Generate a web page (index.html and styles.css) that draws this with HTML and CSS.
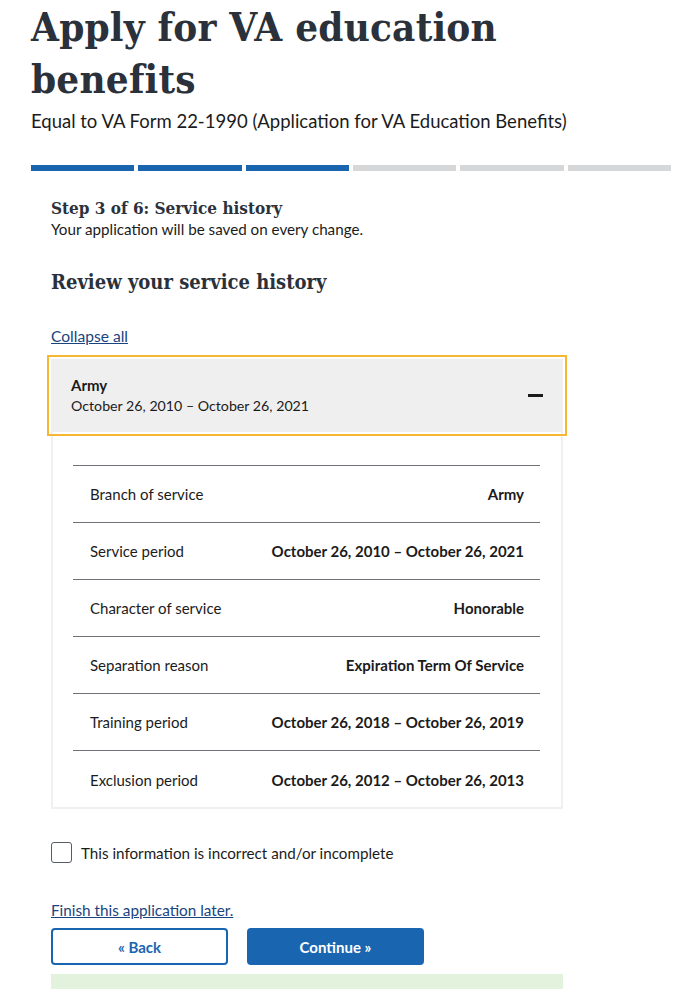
FILE: index.html
```html
<!DOCTYPE html>
<html lang="en">
<head>
<meta charset="utf-8">
<title>Apply for VA education benefits</title>
<link rel="stylesheet" href="styles.css">
</head>
<body>
<div class="page">
  <header class="intro">
    <h1 class="title">Apply for VA education benefits</h1>
    <p class="subtitle">Equal to VA Form 22-1990 (Application for VA Education Benefits)</p>
  </header>
  <div class="progress">
    <span class="seg done"></span><span class="seg done"></span><span class="seg done"></span><span class="seg"></span><span class="seg"></span><span class="seg"></span>
  </div>
  <main class="form">
    <h2 class="step">Step 3 of 6: Service history</h2>
    <p class="saved">Your application will be saved on every change.</p>
    <h3 class="section-title">Review your service history</h3>
    <a class="link collapse" href="#">Collapse all</a>
    <div class="accordion">
      <button class="acc-head" type="button">
        <span class="acc-text">
          <span class="acc-title">Army</span>
          <span class="acc-sub">October 26, 2010 – October 26, 2021</span>
        </span>
        <span class="minus"></span>
      </button>
      <div class="acc-body">
        <dl class="rows">
          <div class="row"><dt>Branch of service</dt><dd>Army</dd></div>
          <div class="row"><dt>Service period</dt><dd>October 26, 2010 – October 26, 2021</dd></div>
          <div class="row"><dt>Character of service</dt><dd>Honorable</dd></div>
          <div class="row"><dt>Separation reason</dt><dd>Expiration Term Of Service</dd></div>
          <div class="row"><dt>Training period</dt><dd>October 26, 2018 – October 26, 2019</dd></div>
          <div class="row"><dt>Exclusion period</dt><dd>October 26, 2012 – October 26, 2013</dd></div>
        </dl>
      </div>
    </div>
    <label class="check">
      <span class="box"></span>
      <span>This information is incorrect and/or incomplete</span>
    </label>
    <a class="link finish" href="#">Finish this application later.</a>
    <div class="actions">
      <button class="btn btn-outline" type="button">« Back</button>
      <button class="btn btn-primary" type="button">Continue »</button>
    </div>
    <div class="notice"></div>
  </main>
</div>
</body>
</html>
```

FILE: styles.css
```css
* { box-sizing: border-box; }
html, body { margin: 0; padding: 0; background: #fff; }
body {
  font-family: "Lato", "Noto Sans", sans-serif;
  color: #1b1b1b;
  width: 694px;
  height: 989px;
  overflow: hidden;
}
.page { padding: 0 23px 0 31px; }
.title {
  font-family: "DejaVu Serif Condensed", "DejaVu Serif", serif;
  font-weight: 700;
  font-size: 40px;
  line-height: 52px;
  color: #2b313a;
  margin: 1px 0 0;
  width: 560px;
  letter-spacing: 0.2px;
}
.subtitle {
  font-size: 18.5px;
  line-height: 28px;
  margin: 2px 0 0;
  color: #1b1b1b;
}
.progress {
  display: flex;
  gap: 4px;
  margin-top: 30px;
  height: 6px;
}
.seg { flex: 1; background: #d6d7d9; }
.seg.done { background: #1a65b0; }
.form { padding: 26px 0 0 20px; width: 532px; }
.step {
  font-family: "DejaVu Serif Condensed", "DejaVu Serif", serif;
  font-size: 17px;
  line-height: 22px;
  font-weight: 700;
  margin: 0;
  color: #2b313a;
}
.saved { font-size: 15.2px; line-height: 20px; margin: 0; }
.section-title {
  font-family: "DejaVu Serif Condensed", "DejaVu Serif", serif;
  font-size: 20px;
  line-height: 26px;
  font-weight: 700;
  color: #2b313a;
  margin: 30px 0 0;
}
.link { color: #1a4480; text-decoration: underline; font-size: 16px; line-height: 22px; display: inline-block; }
.collapse { margin-top: 30px; font-size: 15.6px; }
.accordion { margin-top: 12px; width: 512px; }
.acc-head {
  display: flex;
  align-items: center;
  justify-content: space-between;
  width: 100%;
  background: #efefef;
  border: 0;
  outline: 2px solid #f7b733;
  outline-offset: 2px;
  padding: 13px 20px 13px 20px;
  margin-top: 3px;
  text-align: left;
  font-family: inherit;
  color: #1b1b1b;
  height: 73px;
}
.acc-text { display: flex; flex-direction: column; }
.acc-title { font-weight: 700; font-size: 15px; line-height: 20px; }
.acc-sub { font-size: 14.2px; line-height: 22px; }
.minus { width: 15px; height: 3px; background: #1b1b1b; margin-right: 0; }
.acc-body {
  border: 2px solid #f0f0f0;
  border-top: 0;
  padding: 33px 21px 0 20px;
  height: 377px;
}
.rows { margin: 0; border-top: 1px solid #6f7378; }
.row {
  display: flex;
  justify-content: space-between;
  align-items: center;
  height: 57px;
  padding: 0 16px 0 17px;
  border-bottom: 1px solid #6f7378;
  font-size: 15px;
}
.row:last-child { border-bottom: 0; }
.row dt { color: #1b1b1b; }
.row dd { margin: 0; font-weight: 700; }
.check {
  display: flex;
  align-items: center;
  gap: 9px;
  margin-top: 33px;
  font-size: 15.2px;
}
.box {
  width: 21px; height: 21px;
  border: 1px solid #565c65;
  border-radius: 3px;
  background: #fff;
  flex: none;
}
.finish { margin-top: 36px; font-size: 15.3px; }
.actions { display: flex; gap: 19px; margin-top: 7px; }
.btn {
  width: 177px;
  height: 37px;
  border-radius: 4px;
  font-family: inherit;
  font-weight: 700;
  font-size: 15px;
}
.btn-outline { background: #fff; color: #1a65b0; border: 2px solid #1a65b0; }
.btn-primary { background: #1a65b0; color: #fff; border: 0; }
.notice { margin-top: 9px; height: 30px; width: 512px; background: #e2f2dc; }
```
